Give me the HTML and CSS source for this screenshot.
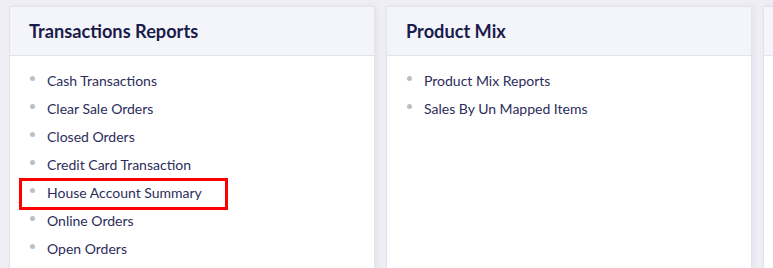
FILE: index.html
```html
<!DOCTYPE html>
<html>
<head>
<meta charset="utf-8">
<link rel="stylesheet" href="styles.css">
</head>
<body>
<div class="grid">
  <section class="card">
    <header class="card-head"><h2>Transactions Reports</h2></header>
    <ul class="links">
      <li><span class="dot"></span>Cash Transactions</li>
      <li><span class="dot"></span>Clear Sale Orders</li>
      <li><span class="dot"></span>Closed Orders</li>
      <li><span class="dot"></span>Credit Card Transaction</li>
      <li class="marked"><span class="dot"></span>House Account Summary<span class="highlight"></span></li>
      <li><span class="dot"></span>Online Orders</li>
      <li><span class="dot"></span>Open Orders</li>
    </ul>
  </section>
  <section class="card">
    <header class="card-head"><h2>Product Mix</h2></header>
    <ul class="links">
      <li><span class="dot"></span>Product Mix Reports</li>
      <li><span class="dot"></span>Sales By Un Mapped Items</li>
    </ul>
  </section>
  <section class="card card-cut">
    <header class="card-head"><h2>&nbsp;</h2></header>
    <ul class="links"></ul>
  </section>
</div>
</body>
</html>
```
FILE: styles.css
```css
html, body {
  margin: 0;
  padding: 0;
  background: #eeeef4;
  font-family: Lato, "Open Sans", sans-serif;
  overflow: hidden;
}
.grid {
  display: grid;
  grid-template-columns: 366px 366px 10px;
  gap: 11px;
  padding: 6px 0 0 9px;
  height: 268px;
  box-sizing: border-box;
  overflow: hidden;
}
.card {
  background: #ffffff;
  border: 1px solid #e2e3ee;
  border-bottom: none;
  box-shadow: 2px 0 6px rgba(40, 40, 90, 0.05);
  display: flex;
  flex-direction: column;
  min-width: 0;
}
.card-cut {
  border-right: none;
}
.card-head {
  background: #f4f5fa;
  border-bottom: 1px solid #e2e3ee;
  height: 48px;
  display: flex;
  align-items: center;
  padding-left: 19px;
  white-space: nowrap;
}
.card-head h2 {
  margin: 0;
  font-size: 18.2px;
  font-weight: 700;
  color: #1b1c4b;
}
.links {
  list-style: none;
  margin: 0;
  padding: 10px 0 0 20px;
}
.links li {
  position: relative;
  display: flex;
  align-items: center;
  height: 28px;
  font-size: 14px;
  color: #2c2d5b;
}
.dot {
  width: 5px;
  height: 5px;
  border-radius: 50%;
  background: #bdbdc4;
  margin-right: 12px;
  flex: none;
  position: relative;
  top: -2px;
}
.highlight {
  position: absolute;
  left: -11px;
  top: 0;
  width: 209px;
  height: 32px;
  border: 3px solid #ff0000;
  box-sizing: border-box;
}
```
